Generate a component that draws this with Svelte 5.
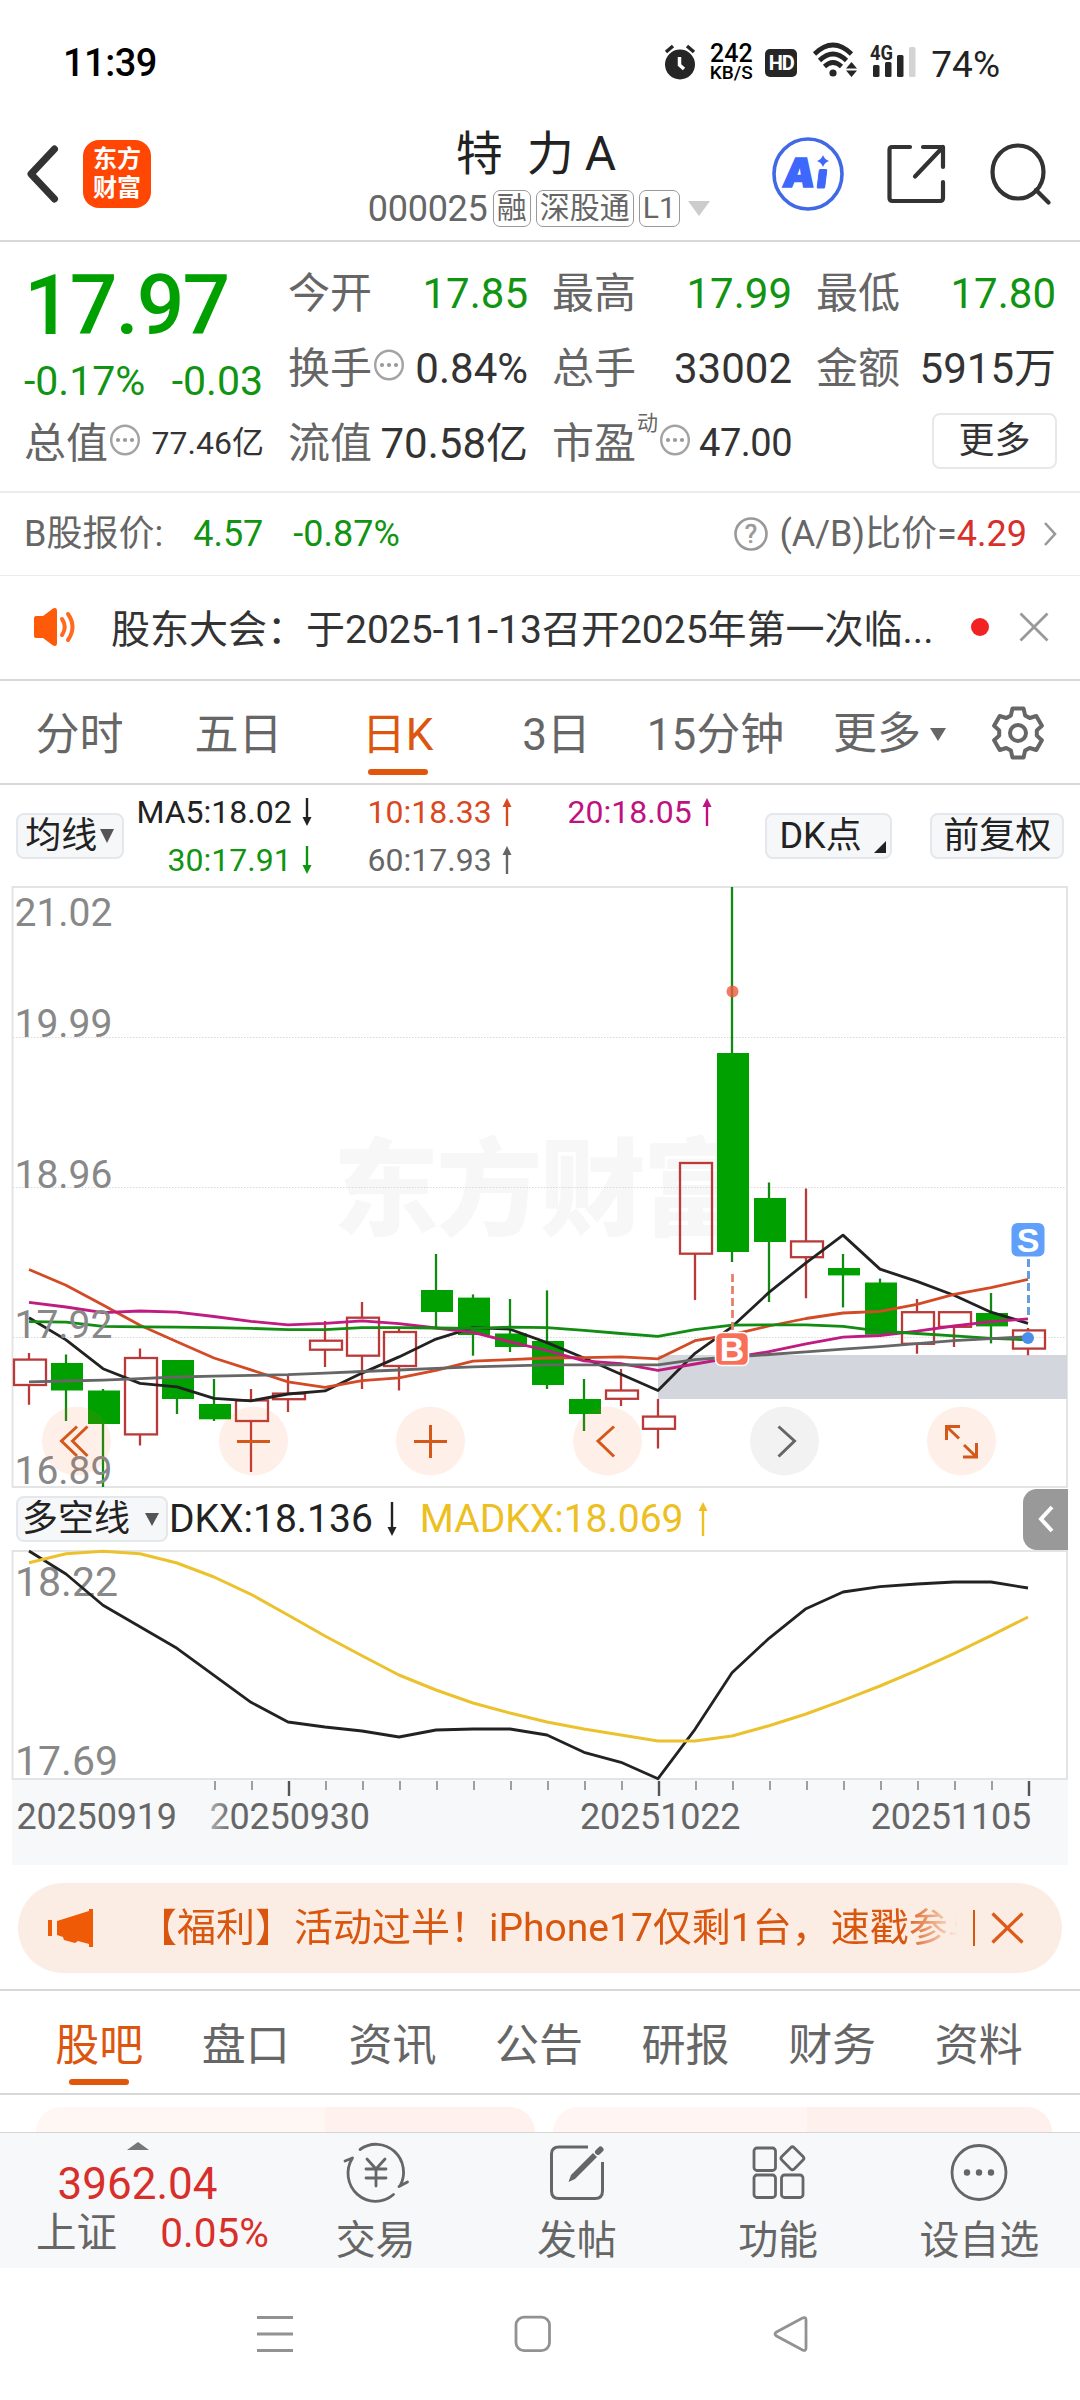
<script lang="ts">
  /**
   * Stock detail page: quote header, daily K-line chart, DKX indicator and bottom bar
   */
  type Candle = [kind: 'up' | 'down', high: number, top: number, bottom: number, low: number];

  const periods = ['分时', '五日', '日K', '3日', '15分钟'];
  const sections = ['股吧', '盘口', '资讯', '公告', '研报', '财务', '资料'];

  const averages = [
    { text: 'MA5:18.02', up: false, tone: 'ink' },
    { text: '10:18.33', up: true, tone: 'orange' },
    { text: '20:18.05', up: true, tone: 'magenta' },
    { text: '30:17.91', up: false, tone: 'green' },
    { text: '60:17.93', up: true, tone: 'gray' },
  ];

  // Chart coordinates share the page's y axis
  const candles: Candle[] = [
    ['up', 1353, 1359.6, 1385, 1404.7],
    ['down', 1354.5, 1363, 1390.5, 1421],
    ['down', 1389, 1390.5, 1424, 1487],
    ['up', 1348.6, 1358, 1434.4, 1445.4],
    ['down', 1360, 1360, 1399, 1414],
    ['down', 1379, 1404, 1419.3, 1421],
    ['up', 1389, 1400.4, 1421, 1472],
    ['up', 1374, 1393.6, 1399.2, 1412],
    ['up', 1321, 1340.7, 1349.7, 1367],
    ['up', 1302, 1317.7, 1355.7, 1389],
    ['up', 1329, 1332, 1366, 1390.5],
    ['down', 1254, 1290, 1312, 1329],
    ['down', 1294.4, 1297.6, 1335, 1355.7],
    ['down', 1299, 1333.5, 1347, 1352],
    ['down', 1290.4, 1341, 1385, 1389],
    ['down', 1379, 1399, 1414, 1431],
    ['up', 1369, 1390.5, 1398.8, 1406],
    ['up', 1399, 1416.6, 1428.8, 1448.6],
    ['up', 1163, 1163, 1253.7, 1300],
    ['down', 887, 1053, 1252, 1262],
    ['down', 1182.5, 1198, 1242, 1302],
    ['up', 1188.4, 1241.4, 1257.2, 1298.3],
    ['down', 1254, 1268, 1275.4, 1307.4],
    ['down', 1278.6, 1282.5, 1334.7, 1334.7],
    ['up', 1299, 1312.2, 1343.8, 1353.7],
    ['up', 1312.2, 1312.2, 1326.8, 1347],
    ['down', 1293, 1313, 1326.4, 1343.4],
    ['up', 1328, 1330.4, 1348.6, 1355.3],
  ];

  const ma5 = [1317.7, 1339.9, 1368.7, 1383.4, 1386.9, 1398.4, 1400.8, 1394, 1390.9, 1373.1, 1356.9, 1339.1, 1327.6, 1329.2, 1342.6, 1358, 1374.3, 1390.5, 1353.3, 1326.8, 1292.4, 1262.8, 1235.1, 1269.1, 1281.4, 1295.2, 1312.2, 1323.3];
  const ma10 = [1269.5, 1285.3, 1305.1, 1325.2, 1341.8, 1358, 1369.9, 1381.8, 1387.3, 1380.6, 1377.8, 1370.3, 1361.2, 1359.6, 1358, 1357.7, 1356.9, 1358.8, 1340.7, 1334.7, 1326, 1318.5, 1313, 1311.4, 1304.3, 1294.4, 1287.7, 1279.4];
  const ma20 = [1302.3, 1307, 1312.6, 1311, 1312.2, 1316.5, 1321.3, 1324.8, 1323.3, 1320.9, 1323.7, 1328, 1332.4, 1341.8, 1350.5, 1360.8, 1363.6, 1370.3, 1364, 1357.7, 1351.7, 1343.8, 1337.1, 1335.5, 1331.2, 1326, 1321.7, 1318.9];
  const ma30 = [1321.7, 1322.1, 1326.4, 1326.8, 1327.2, 1327.6, 1328.4, 1329.6, 1329.6, 1327.6, 1327.6, 1328, 1328.4, 1327.2, 1327.6, 1330.4, 1333.5, 1336.3, 1329.6, 1325.2, 1324.8, 1324.8, 1326.4, 1331.2, 1333.5, 1335.9, 1338.3, 1339.9];
  const ma60 = [1381.8, 1381, 1380.2, 1378.6, 1377, 1376.2, 1375.4, 1374.7, 1373.1, 1371.5, 1370, 1368.4, 1366.8, 1365.8, 1364.8, 1364.8, 1364.8, 1364.8, 1359.6, 1357, 1354.5, 1351.8, 1349.2, 1346.6, 1343.6, 1340.7, 1338.7, 1336.7];
  const dkx = [1551, 1574, 1605.3, 1626.7, 1648.3, 1675.3, 1702.3, 1722, 1727, 1731, 1737, 1730, 1729, 1729, 1735, 1752.3, 1762.3, 1778.7, 1729.3, 1672.7, 1638.3, 1608.7, 1592, 1586.7, 1584, 1582, 1582, 1588];
  const madkx = [1562.7, 1553.7, 1551.3, 1553.7, 1563, 1577, 1594.3, 1615, 1636, 1655.7, 1675, 1690, 1703, 1713, 1722, 1729, 1735, 1741, 1741, 1736, 1725.7, 1714, 1700.3, 1686, 1670.3, 1653.7, 1635.7, 1617];

  const priceLabels: [string, number][] = [
    ['21.02', 925.5],
    ['19.99', 1037],
    ['18.96', 1188],
    ['17.92', 1338],
    ['16.89', 1484],
  ];

  const ticks = Array.from({ length: 23 }, (_, i) => i + 5);

  const slotX = (i: number) => 29 + 37 * i;
  const line = (ys: number[]) => ys.map((y, i) => `${slotX(i)},${y}`).join(' ');

  function gearPath(cx: number, cy: number) {
    const points: string[] = [];
    for (let k = 0; k < 6; k++) {
      for (const [offset, r] of [[-22, 19], [-13, 25], [13, 25], [22, 19]]) {
        const a = ((60 * k - 90 + offset) * Math.PI) / 180;
        points.push(`${(cx + r * Math.cos(a)).toFixed(1)} ${(cy + r * Math.sin(a)).toFixed(1)}`);
      }
    }
    return `M${points.join('L')}Z`;
  }
</script>

{#snippet more()}
  <svg class="more-dots" width="30" height="32" viewBox="0 0 30 32">
    <ellipse cx="15" cy="16" rx="13.8" ry="14.2" fill="none" stroke="#a3a3a3" stroke-width="2.4" />
    <circle cx="8" cy="16" r="2.1" fill="#999" />
    <circle cx="15" cy="16" r="2.1" fill="#999" />
    <circle cx="22" cy="16" r="2.1" fill="#999" />
  </svg>
{/snippet}

{#snippet arrow(up: boolean, height: number)}
  <svg class="arrow" class:arrow-down={!up} width="12" {height} viewBox="0 0 12 {height}">
    <path d="M6 {height}V4" stroke="currentColor" stroke-width="2.4" />
    <path d="M6 0L10.5 9H1.5Z" fill="currentColor" />
  </svg>
{/snippet}

<div class="page">
  <div class="status-bar">
    <span class="clock">11:39</span>
    <div class="status-icons">
      <svg class="alarm" width="32" height="36" viewBox="0 0 32 36">
        <circle cx="16" cy="20.5" r="15" fill="#262626" />
        <path d="M2 8L9 2M30 8L23 2" stroke="#262626" stroke-width="3.5" />
        <path d="M15.5 13V21L20 25" fill="none" stroke="#fff" stroke-width="3.5" />
      </svg>
      <div class="net-speed"><b>242</b><span>KB/S</span></div>
      <span class="hd">HD</span>
      <svg class="wifi" width="46" height="36" viewBox="0 0 46 36">
        <g fill="none" stroke="#262626" stroke-width="4.6">
          <path d="M2.5 12Q21 -6 39.5 12" />
          <path d="M7.5 18.5Q21 5.5 34.5 18.5" />
          <path d="M12.5 24.5Q21 16.5 29.5 24.5" />
        </g>
        <circle cx="21" cy="31" r="3.6" fill="#262626" />
        <path d="M39.5 20L45 26.5H34ZM39.5 35L45 28.5H34Z" fill="#262626" />
      </svg>
      <svg class="signal" width="48" height="34" viewBox="0 0 48 34">
        <text x="0" y="16" font-size="21" font-weight="700" textLength="23" lengthAdjust="spacingAndGlyphs" fill="#262626">4G</text>
        <rect x="3" y="21" width="6.5" height="12" rx="1.5" fill="#262626" />
        <rect x="15" y="18" width="6.5" height="15" rx="1.5" fill="#262626" />
        <rect x="27" y="11" width="6.5" height="22" rx="1.5" fill="#262626" />
        <rect x="39" y="3" width="6.5" height="30" rx="1.5" fill="#d4d4d4" />
      </svg>
      <span class="battery">74%</span>
    </div>
  </div>

  <header class="header">
    <svg class="back" width="34" height="58" viewBox="0 0 34 58">
      <path d="M28.5 4L5 29L28.5 54" fill="none" stroke="#333" stroke-width="7" stroke-linecap="round" stroke-linejoin="round" />
    </svg>
    <div class="logo"><span>东方</span><span>财富</span></div>
    <div class="title">
      <h1><span>特</span><span>力</span><span class="title-a">A</span></h1>
      <div class="code-row">
        <span class="code">000025</span>
        <span class="tag">融</span>
        <span class="tag">深股通</span>
        <span class="tag">L1</span>
        <svg class="code-caret" width="22" height="15" viewBox="0 0 22 15"><path d="M0 0H22L11 15Z" fill="#ccc" /></svg>
      </div>
    </div>
    <div class="header-actions">
      <svg width="72" height="76" viewBox="0 0 72 76">
        <ellipse cx="36" cy="38" rx="34" ry="35" fill="none" stroke="#4169e6" stroke-width="3.6" />
        <g transform="skewX(-7)" fill="#3d68fb" stroke="#3d68fb">
          <text x="16" y="51.5" font-size="40" font-weight="900" font-family="Inter" stroke-width="1.5">A</text>
          <rect x="51.5" y="33.5" width="7.5" height="18.5" rx="1" />
        </g>
        <path d="M51 19Q52.5 23.5 57 25Q52.5 26.5 51 31Q49.5 26.5 45 25Q49.5 23.5 51 19Z" fill="#3d68fb" />
      </svg>
      <svg class="share" width="60" height="60" viewBox="0 0 60 60" fill="none" stroke="#333" stroke-width="4.2" stroke-linecap="round" stroke-linejoin="round">
        <path d="M24 3H6Q3.5 3 3.5 6V54Q3.5 57 6.5 57H54Q57 57 57 54V38" />
        <path d="M37 3H57V23M57 3L29 32.5" />
      </svg>
      <svg class="search" width="62" height="64" viewBox="0 0 62 64" fill="none" stroke="#333" stroke-width="4.2" stroke-linecap="round">
        <ellipse cx="28" cy="30" rx="25.5" ry="26.5" />
        <path d="M46 48L58.5 60.5" />
      </svg>
    </div>
  </header>

  <section class="quote">
    <div class="quote-col">
      <div class="price">17.97</div>
      <div class="change"><span>-0.17%</span><span>-0.03</span></div>
      <div class="stat">
        <span class="label">总值</span>{@render more()}
        <span class="value value-small">77.46亿</span>
      </div>
    </div>
    <div class="quote-col">
      <div class="stat"><span class="label">今开</span><span class="value fall">17.85</span></div>
      <div class="stat"><span class="label">换手</span>{@render more()}<span class="value">0.84%</span></div>
      <div class="stat"><span class="label">流值</span><span class="value">70.58亿</span></div>
    </div>
    <div class="quote-col">
      <div class="stat"><span class="label">最高</span><span class="value fall">17.99</span></div>
      <div class="stat"><span class="label">总手</span><span class="value">33002</span></div>
      <div class="stat">
        <span class="label">市盈</span><span class="label-sup">动</span>{@render more()}
        <span class="value value-mid">47.00</span>
      </div>
    </div>
    <div class="quote-col">
      <div class="stat"><span class="label">最低</span><span class="value fall">17.80</span></div>
      <div class="stat"><span class="label">金额</span><span class="value">5915万</span></div>
      <div class="stat"><button class="more-btn">更多</button></div>
    </div>
  </section>

  <section class="b-share">
    <span class="muted">B股报价:</span>
    <span class="fall b-price">4.57</span>
    <span class="fall b-change">-0.87%</span>
    <div class="ratio">
      <svg class="help" width="34" height="36" viewBox="0 0 34 36">
        <circle cx="17" cy="18" r="15.5" fill="none" stroke="#999" stroke-width="2.6" />
        <text x="17" y="27" text-anchor="middle" font-size="26" fill="#999" stroke="#999" stroke-width=".6">?</text>
      </svg>
      <span class="muted">(A/B)比价=</span><span class="rise">4.29</span>
      <svg class="chevron" width="14" height="26" viewBox="0 0 14 26"><path d="M2 2L12 13L2 24" fill="none" stroke="#999" stroke-width="2.6" /></svg>
    </div>
  </section>

  <section class="notice">
    <svg width="46" height="38" viewBox="0 0 46 38">
      <path d="M1 10Q1 8 3 8H10L20 .5Q24 -1 24 3V35Q24 39 20 37.5L10 30H3Q1 30 1 28Z" fill="#ff5a0a" />
      <path d="M29 11Q34.5 19 29 27M35 6Q44 19 35 32" fill="none" stroke="#ff6a20" stroke-width="4" stroke-linecap="round" />
    </svg>
    <span class="notice-text">股东大会：于2025-11-13召开2025年第一次临...</span>
    <i class="dot"></i>
    <svg width="30" height="30" viewBox="0 0 30 30"><path d="M1.5 1.5L28.5 28.5M28.5 1.5L1.5 28.5" stroke="#999" stroke-width="2.8" /></svg>
  </section>

  <nav class="periods">
    {#each periods as period}
      <span class="period" class:active={period === '日K'}>{period}</span>
    {/each}
    <span class="period period-more">更多
      <svg width="16" height="13" viewBox="0 0 16 13"><path d="M0 0H16L8 13Z" fill="#666" /></svg>
    </span>
    <svg class="gear" width="56" height="56" viewBox="0 0 56 56" fill="none" stroke="#666" stroke-width="4" stroke-linejoin="round">
      <path d={gearPath(28, 28)} />
      <circle cx="28" cy="28" r="8" />
    </svg>
  </nav>

  <section class="legend">
    <button class="chip">均线<svg width="14" height="14" viewBox="0 0 14 14"><path d="M0 0H14L7 14Z" fill="#555" /></svg></button>
    <div class="averages">
      {#each averages as ma}
        <span class="average {ma.tone}">{ma.text}{@render arrow(ma.up, 28)}</span>
      {/each}
    </div>
    <button class="chip chip-dk">DK点<svg width="12" height="12" viewBox="0 0 12 12"><path d="M12 0V12H0Z" fill="#222" /></svg></button>
    <button class="chip chip-adjust">前复权</button>
  </section>

  <svg class="kline" width="1056" height="602" viewBox="12 886 1056 602">
    <text class="watermark" x="541" y="1227" text-anchor="middle" textLength="416">东方财富</text>
    <path class="grid" d="M13 1037.5H1067M13 1187.5H1067M13 1337.5H1067" />
    <rect x="12.5" y="887" width="1054.5" height="600" fill="none" stroke="#e2e2e2" stroke-width="1.8" />
    <rect x="658" y="1355" width="409" height="44" fill="#d3d6dc" />

    {#each candles as [kind, high, top, bottom, low], i}
      {#if kind === 'up'}
        <g stroke="#b93a38" stroke-width="2.3" fill="none">
          <rect x={slotX(i) - 15} y={top} width="32" height={bottom - top} />
          <path d="M{slotX(i)} {high}V{top}M{slotX(i)} {bottom}V{low}" />
        </g>
      {:else}
        <path d="M{slotX(i)} {high}V{low}" stroke="#128a12" stroke-width="2.3" />
        <rect x={slotX(i) - 15} y={top} width="32" height={bottom - top} fill="#00a000" />
      {/if}
    {/each}

    <g fill="none" stroke-width="2.8" stroke-linejoin="round">
      <polyline points={line(ma5)} stroke="#222" />
      <polyline points={line(ma10)} stroke="#d24a26" />
      <polyline points={line(ma20)} stroke="#bf1b80" />
      <polyline points={line(ma30)} stroke="#128c12" />
      <polyline points={line(ma60)} stroke="#666" />
    </g>

    <!-- buy / sell markers -->
    <circle cx="732.5" cy="991.5" r="6" fill="#ee5a3c" fill-opacity=".8" />
    <path d="M732.5 1274V1332" stroke="#e67f6c" stroke-width="2.8" stroke-dasharray="8 4" />
    <rect x="715.5" y="1332.5" width="33" height="33" rx="6" fill="#f9705a" stroke="#fff" stroke-width="1.6" />
    <text class="marker" x="732" y="1361">B</text>
    <rect x="1011.5" y="1223" width="33" height="33.5" rx="6" fill="#60a0fa" />
    <text class="marker" x="1028" y="1252">S</text>
    <path d="M1028.5 1259V1316" stroke="#649fdd" stroke-width="3" stroke-dasharray="8 4" />
    <circle cx="1028" cy="1338" r="6" fill="#4a90ea" />

    {#each priceLabels as [text, y]}
      <text class="axis-label" x="14.5" {y}>{text}</text>
    {/each}

    <!-- chart controls -->
    <g fill="#f96a1e" fill-opacity=".1">
      <circle cx="76.5" cy="1441" r="34.5" />
      <circle cx="253.5" cy="1441" r="34.5" />
      <circle cx="430.5" cy="1441" r="34.5" />
      <circle cx="607.5" cy="1441" r="34.5" />
      <circle cx="961.5" cy="1441" r="34.5" />
    </g>
    <circle cx="784.5" cy="1441" r="34.5" fill="#f2f2f2" />
    <g fill="none" stroke="#d4581a" stroke-width="3">
      <path d="M77 1426.5L61.5 1441L77 1456M87.5 1426.5L72.5 1441L87.5 1456" />
      <path d="M237 1441.5H270" />
      <path d="M414 1441.5H447M430.5 1425V1458" />
      <path d="M614 1426.5L598 1441L614 1456.5" />
      <path d="M960 1426.5H946.5V1440M947 1427L959 1438.5" />
      <path d="M963 1457H976.5V1443M976 1456.5L964 1445" />
    </g>
    <path d="M778.5 1426.5L794.5 1441L778.5 1456.5" fill="none" stroke="#666" stroke-width="3" />
  </svg>

  <section class="indicator-head">
    <button class="chip chip-dkx">多空线<svg width="14" height="13" viewBox="0 0 14 13"><path d="M0 0H14L7 13Z" fill="#555" /></svg></button>
    <span class="indicator ink">DKX:18.136{@render arrow(false, 34)}</span>
    <span class="indicator yellow">MADKX:18.069{@render arrow(true, 34)}</span>
    <button class="drawer" aria-label="展开">
      <svg width="16" height="28" viewBox="0 0 16 28"><path d="M14 2L3 14L14 26" fill="none" stroke="#fff" stroke-width="4" /></svg>
    </button>
  </section>

  <svg class="indicator-chart" width="1056" height="315" viewBox="12 1550 1056 315">
    <defs>
      <linearGradient id="dateFade" gradientUnits="userSpaceOnUse" x1="208" x2="232" y1="0" y2="0">
        <stop offset="0" stop-color="#666" stop-opacity=".45" />
        <stop offset="1" stop-color="#666" />
      </linearGradient>
    </defs>
    <rect x="12" y="1780" width="1056" height="85" fill="#f7f8fa" />
    <rect x="12.5" y="1551" width="1054.5" height="228" fill="none" stroke="#e2e2e2" stroke-width="1.8" />
    <text class="axis-label axis-label-sub" x="15" y="1596">18.22</text>
    <text class="axis-label axis-label-sub" x="15" y="1775">17.69</text>
    <polyline points={line(dkx)} fill="none" stroke="#222" stroke-width="2.8" stroke-linejoin="round" />
    <polyline points={line(madkx)} fill="none" stroke="#ebc22e" stroke-width="3" stroke-linejoin="round" />
    {#each ticks as i}
      {@const major = i === 7 || i === 17 || i === 27}
      <path d="M{slotX(i) + 1} 1781V{major ? 1796 : 1790}" stroke={major ? '#555' : '#888'} stroke-width={major ? 2.4 : 1.6} />
    {/each}
    <g class="dates">
      <text x="16.5" y="1829">20250919</text>
      <text x="209.5" y="1829" fill="url(#dateFade)">20250930</text>
      <text x="580" y="1829">20251022</text>
      <text x="1031" y="1829" text-anchor="end">20251105</text>
    </g>
  </svg>

  <section class="promo-wrap">
    <div class="promo">
      <svg width="46" height="40" viewBox="0 0 46 40" fill="#ee5a05">
        <path d="M0 12H4V28H0Z" />
        <path d="M9 13L41 3V1H45V39H41V36L30 33L27 35L16 32L15 29L9 27Z" />
      </svg>
      <span class="promo-text">【福利】活动过半！iPhone17仅剩1台，速戳参与</span>
      <i class="promo-divider"></i>
      <svg width="33" height="32" viewBox="0 0 33 32"><path d="M1.5 1.5L31.5 30.5M31.5 1.5L1.5 30.5" stroke="#dd5a18" stroke-width="3.2" /></svg>
    </div>
  </section>

  <nav class="sections">
    {#each sections as name, i}
      <span class="section-tab" class:active={i === 0}>{name}</span>
    {/each}
  </nav>

  <div class="cards">
    <div class="card"></div>
    <div class="card"></div>
  </div>

  <footer class="bottom-bar">
    <div class="index">
      <svg width="22" height="8" viewBox="0 0 22 8"><path d="M0 8L11 0L22 8Z" fill="#777" /></svg>
      <div class="index-value">3962.04</div>
      <div class="index-row"><span class="muted">上证</span><span class="rise">0.05%</span></div>
    </div>
    <div class="action">
      <svg width="66" height="60" viewBox="0 0 66 60" fill="none" stroke="#666" stroke-width="2.8" stroke-linecap="round" stroke-linejoin="round">
        <path d="M17 7.5A27.5 28 0 0 1 57 44L56 44.5L64.5 40" />
        <path d="M50.5 52.5A27.5 28 0 0 1 9.5 16L2 19" />
        <path d="M24 17L33 27L42 17M33 27V44M23 27H43M23 36H43" />
      </svg>
      <span>交易</span>
    </div>
    <div class="action">
      <svg width="60" height="60" viewBox="0 0 60 60" fill="none" stroke="#666" stroke-width="3">
        <path d="M41 5H12Q4.5 5 4.5 12V49Q4.5 56.5 12 56.5H48Q55.5 56.5 55.5 49V20" />
        <path d="M21.5 40L24 33L46 11L50 15L28 37Z" fill="#666" stroke="none" />
        <path d="M51 10L53.5 7.5" stroke-width="6" stroke-linecap="round" />
      </svg>
      <span>发帖</span>
    </div>
    <div class="action">
      <svg width="60" height="60" viewBox="0 0 60 60" fill="none" stroke="#666" stroke-width="2.8">
        <rect x="6" y="6" width="21.5" height="22.5" rx="3" />
        <rect x="6" y="33" width="21.5" height="22.5" rx="3" />
        <rect x="33.5" y="33" width="21.5" height="22.5" rx="3" />
        <rect x="35.5" y="7.5" width="17.5" height="17.5" rx="2.5" transform="rotate(45 44.25 16.5)" />
      </svg>
      <span>功能</span>
    </div>
    <div class="action">
      <svg width="60" height="60" viewBox="0 0 60 60">
        <circle cx="30" cy="30.5" r="27" fill="none" stroke="#666" stroke-width="2.8" />
        <g fill="#666"><circle cx="18" cy="30.5" r="3.2" /><circle cx="30" cy="30.5" r="3.2" /><circle cx="42" cy="30.5" r="3.2" /></g>
      </svg>
      <span>设自选</span>
    </div>
  </footer>

  <div class="system-nav">
    <svg width="38" height="38" viewBox="0 0 38 38"><path d="M1 2.5H37M1 19H37M1 35.5H37" stroke="#929292" stroke-width="3" /></svg>
    <svg width="38" height="38" viewBox="0 0 38 38"><rect x="1" y="2.2" width="33.5" height="33.5" rx="8" fill="none" stroke="#929292" stroke-width="2.8" /></svg>
    <svg width="36" height="38" viewBox="0 0 36 38"><path d="M3.5 17L29.5 3Q33 1.5 33 5V33Q33 36.5 29.5 35L3.5 21Q.5 19 3.5 17Z" fill="none" stroke="#929292" stroke-width="2.8" /></svg>
  </div>
</div>

<style>
  :global(body) {
    background: #fff;
  }

  .page {
    width: 1080px;
    height: 2400px;
    overflow: hidden;
    background: #fff;
    color: #333;
    font-family: Roboto, "Noto Sans CJK SC", sans-serif;
  }

  .page * {
    box-sizing: border-box;
  }

  svg {
    display: block;
    flex: none;
    overflow: visible;
  }

  button {
    font: inherit;
    color: inherit;
    padding: 0;
  }

  .status-bar {
    display: flex;
    justify-content: space-between;
    height: 108px;
    padding: 38px 80px 0 63px;
    color: #222;
  }

  .clock {
    font-size: 38px;
    font-weight: 500;
    line-height: 50px;
    color: #000;
    letter-spacing: -0.5px;
  }

  .status-icons {
    display: flex;
    align-items: center;
    height: 50px;
  }

  .alarm {
    margin-top: -3px;
  }

  .net-speed {
    display: flex;
    flex-direction: column;
    align-items: center;
    width: 44px;
    margin-left: 13px;
    font-size: 19px;
    font-weight: 500;
    line-height: 18px;
    color: #000;
  }

  .net-speed b {
    font-size: 25px;
    font-weight: 500;
    line-height: 20px;
  }

  .hd {
    width: 32px;
    height: 28px;
    margin-left: 12px;
    border-radius: 5px;
    background: #262626;
    color: #fff;
    font-size: 20px;
    font-weight: 700;
    line-height: 29px;
    text-align: center;
    letter-spacing: -1px;
  }

  .wifi {
    margin-left: 15px;
    margin-top: -6px;
  }

  .signal {
    margin-left: 12px;
    margin-top: -4px;
  }

  .battery {
    margin-left: 13px;
    font-size: 37px;
    line-height: 50px;
    margin-top: 4px;
  }

  .header {
    display: flex;
    height: 134px;
    padding: 0 28px 0 26px;
    border-bottom: 2px solid #d8d8d8;
  }

  .back {
    margin-top: 37px;
  }

  .logo {
    display: flex;
    flex-direction: column;
    align-items: center;
    justify-content: center;
    width: 68px;
    height: 68px;
    margin: 32px 0 0 23px;
    border-radius: 16px;
    background: #ff4603;
    color: #fff;
    font-size: 24px;
    font-weight: 700;
    line-height: 29px;
  }

  .title {
    width: 344px;
    margin-left: 216px;
    padding-top: 23px;
  }

  .title h1 {
    display: flex;
    margin: 0 0 13px 89px;
    font-size: 47px;
    font-weight: 400;
    line-height: 46px;
    color: #222;
  }

  .title h1 span + span {
    margin-left: 24px;
  }

  .title h1 span.title-a {
    margin-left: 11px;
    font-size: 48px;
  }

  .code-row {
    display: flex;
    gap: 5px;
    line-height: 37px;
    white-space: nowrap;
    color: #666;
  }

  .code {
    width: 121px;
    padding-left: 1px;
    font-size: 36px;
    line-height: 38px;
    letter-spacing: -0.3px;
  }

  .tag {
    padding: 0 3px;
    height: 37px;
    border: 1.5px solid #999;
    border-radius: 7px;
    font-size: 30px;
    line-height: 33px;
  }

  .code-caret {
    margin: 11px 0 0 3px;
  }

  .header-actions {
    display: flex;
    align-items: center;
    flex: 1;
    margin-left: 62px;
  }

  .share {
    margin-left: 42px;
  }

  .search {
    margin-left: 44px;
  }

  .quote {
    display: grid;
    grid-template-columns: repeat(4, 239px);
    column-gap: 25px;
    height: 251px;
    padding: 14px 0 0 24px;
    border-bottom: 2px solid #ececec;
  }

  .price {
    height: 100px;
    font-size: 84px;
    font-weight: 500;
    line-height: 100px;
    letter-spacing: -2px;
    color: #00a000;
  }

  .change {
    display: flex;
    justify-content: space-between;
    height: 50px;
    font-size: 41px;
    line-height: 50px;
    color: #119411;
  }

  .stat {
    display: flex;
    align-items: center;
    height: 75px;
    font-size: 42px;
    line-height: 75px;
    white-space: nowrap;
  }

  .label {
    color: #666;
  }

  .label-sup {
    align-self: flex-start;
    margin-left: 1px;
    font-size: 21px;
    line-height: 34px;
    color: #666;
  }

  .more-dots {
    margin: 0 0 8px 2px;
  }

  .value {
    margin: 0 -1px 0 auto;
  }

  .value-small {
    font-size: 32px;
  }

  .value-mid {
    font-size: 38px;
    letter-spacing: -0.5px;
  }

  .fall {
    color: #119411;
  }

  .rise {
    color: #d92f2b;
  }

  .muted {
    color: #666;
  }

  .more-btn {
    width: 125px;
    height: 56px;
    margin: 0 -2px 5px auto;
    border: 2px solid #e8e8e8;
    border-radius: 8px;
    background: #fff;
    font-size: 36px;
    line-height: 50px;
  }

  .b-share {
    display: flex;
    align-items: center;
    height: 83px;
    padding: 0 23px 0 24px;
    border-bottom: 1px solid #ececec;
    font-size: 36px;
    line-height: 80px;
    white-space: nowrap;
  }

  .b-price {
    margin-left: 30px;
  }

  .b-change {
    margin-left: 30px;
  }

  .ratio {
    display: flex;
    align-items: center;
    margin-left: auto;
  }

  .help {
    margin-right: 11px;
  }

  .chevron {
    margin-left: 16px;
  }

  .notice {
    display: flex;
    align-items: center;
    height: 105px;
    padding: 0 30px 2px 33px;
    border-bottom: 2px solid #d8d8d8;
  }

  .notice-text {
    width: 860px;
    margin-left: 32px;
    margin-top: -2px;
    font-size: 39px;
    white-space: nowrap;
  }

  .dot {
    width: 18px;
    height: 18px;
    margin-right: 30px;
    border-radius: 50%;
    background: #f32222;
    flex: none;
  }

  .periods {
    display: flex;
    height: 104px;
    border-bottom: 2px solid #d8d8d8;
  }

  .period {
    display: flex;
    position: relative;
    justify-content: center;
    width: 159px;
    font-size: 44px;
    line-height: 109px;
    white-space: nowrap;
    color: #666;
  }

  .period-more {
    align-items: center;
    gap: 9px;
    width: 189px;
    height: 107px;
  }

  .gear {
    margin: 24px 0 0 6px;
  }

  .active {
    color: #dd560f;
  }

  .active::after {
    content: "";
    position: absolute;
    bottom: 8px;
    width: 60px;
    height: 6px;
    border-radius: 3px;
    background: #e2560b;
  }

  .legend {
    display: flex;
    align-items: center;
    height: 101px;
    padding: 0 16px;
  }

  .chip {
    display: flex;
    align-items: center;
    justify-content: center;
    gap: 3px;
    width: 108px;
    height: 46px;
    border: 2px solid #e4e7eb;
    border-radius: 8px;
    background: #f6f7f9;
    font-size: 36px;
    line-height: 42px;
    white-space: nowrap;
    color: #222;
  }

  .averages {
    display: grid;
    grid-template-columns: repeat(3, 200px);
    margin-left: -11px;
  }

  .average {
    display: flex;
    align-items: center;
    justify-content: flex-end;
    gap: 9px;
    height: 48px;
    font-size: 32px;
    line-height: 48px;
    white-space: nowrap;
  }

  .arrow-down {
    transform: rotate(180deg);
  }

  .ink {
    color: #222;
  }

  .orange {
    color: #d9481f;
  }

  .magenta {
    color: #bf1280;
  }

  .green {
    color: #119411;
  }

  .gray {
    color: #666;
  }

  .yellow {
    color: #edbf22;
  }

  .chip-dk {
    width: 128px;
    margin-left: 52px;
    gap: 12px;
    padding-left: 8px;
  }

  .chip-dk svg {
    align-self: flex-end;
    margin-bottom: 4px;
  }

  .chip-adjust {
    width: 134px;
    margin-left: 38px;
  }

  .kline,
  .indicator-chart {
    margin: 0 12px;
  }

  .watermark {
    font-family: "Noto Sans CJK SC", sans-serif;
    font-size: 106px;
    font-weight: 900;
    fill: #f7f7f7;
  }

  .grid {
    stroke: #d9d9d9;
    stroke-width: 1;
    stroke-dasharray: 1.5 1.5;
  }

  .axis-label {
    font-size: 39px;
    fill: #888;
  }

  .axis-label-sub {
    font-size: 41px;
  }

  .marker {
    font-family: "Liberation Sans", sans-serif;
    font-size: 34px;
    font-weight: 700;
    text-anchor: middle;
    fill: #fff;
  }

  .indicator-head {
    display: flex;
    align-items: center;
    height: 62px;
    padding: 0 12px 0 16px;
  }

  .chip-dkx {
    width: 152px;
    gap: 15px;
    padding-right: 3px;
  }

  .indicator {
    display: flex;
    align-items: center;
    gap: 13px;
    margin-left: 1px;
    font-size: 39px;
    line-height: 62px;
  }

  .indicator + .indicator {
    margin-left: 22px;
  }

  .drawer {
    display: flex;
    align-items: center;
    justify-content: center;
    width: 45px;
    height: 61px;
    margin-left: auto;
    border: 0;
    border-radius: 14px 0 0 14px;
    background: #999;
  }

  .dates {
    font-size: 36px;
    letter-spacing: -0.2px;
    fill: #666;
  }

  .promo-wrap {
    height: 126px;
    padding: 18px;
    border-bottom: 2px solid #d8d8d8;
  }

  .promo {
    display: flex;
    align-items: center;
    height: 90px;
    padding: 0 38px 0 30px;
    border-radius: 45px;
    background: #fcede4;
  }

  .promo-text {
    width: 820px;
    margin-left: 44px;
    overflow: hidden;
    font-size: 39px;
    line-height: 60px;
    white-space: nowrap;
    color: #d9560f;
    mask-image: linear-gradient(to right, #000 765px, transparent 820px);
  }

  .promo-divider {
    width: 2px;
    height: 36px;
    margin: 0 16px 0 15px;
    background: #d9560f;
    flex: none;
  }

  .sections {
    display: grid;
    grid-template-columns: repeat(7, 1fr);
    height: 104px;
    padding: 0 28px 0 26px;
    border-bottom: 2px solid #d8d8d8;
  }

  .section-tab {
    display: flex;
    position: relative;
    justify-content: center;
    height: 102px;
    font-size: 44px;
    line-height: 110px;
    color: #666;
  }

  .section-tab.active {
    color: #dd560f;
  }

  .cards {
    display: flex;
    gap: 18px;
    height: 37px;
    padding: 12px 28px 0 36px;
  }

  .card {
    flex: 1;
    border-radius: 28px 28px 0 0;
    background: linear-gradient(to right, #fff7f4 58%, #fef1ee 58%);
  }

  .card + .card {
    background: linear-gradient(to right, #fff6f3 51%, #fef0ed 51%);
  }

  .bottom-bar {
    display: grid;
    grid-template-columns: 275px repeat(4, 1fr);
    height: 136px;
    border-top: 1px solid #d5d5d5;
    background: #f7f8fa;
  }

  .index {
    display: flex;
    flex-direction: column;
    align-items: center;
    padding-top: 9px;
  }

  .index-value {
    margin-top: 9px;
    font-size: 44px;
    line-height: 50px;
    color: #d92f2b;
  }

  .index-row {
    display: flex;
    align-self: stretch;
    justify-content: space-between;
    margin-top: 1px;
    padding: 0 6px 0 36px;
    font-size: 40.5px;
    line-height: 46px;
  }

  .action {
    display: flex;
    flex-direction: column;
    align-items: center;
    padding-top: 9px;
    font-size: 40px;
    line-height: 60px;
    color: #666;
  }

  .action span {
    margin-top: 9px;
    height: 58px;
  }

  .system-nav {
    display: flex;
    align-items: center;
    justify-content: space-between;
    height: 132px;
    padding: 0 271px 0 256px;
  }
</style>
